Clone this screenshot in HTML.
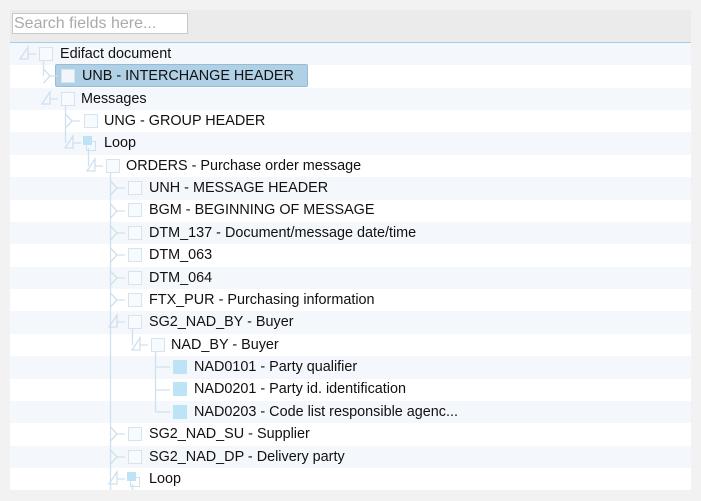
<!DOCTYPE html>
<html><head><style>
body{margin:0;width:701px;height:501px;background:#f2f2f2;font-family:"Liberation Sans",Arial,sans-serif;position:relative;overflow:hidden}
#hdr{position:absolute;left:10px;top:10px;width:681px;height:32px;background:#ebebeb;border-bottom:1px solid #a6cde8}
#search{position:absolute;left:12px;top:13px;width:173px;height:19px;border:1px solid #c8c8c8;background:#fff;color:#aaa;font-size:16px;line-height:19px;padding-left:1px;box-sizing:content-box}
#tree{position:absolute;left:10px;top:43px;width:681px;height:447px;background:#fff;overflow:hidden}
.row{position:absolute;left:0;width:681px;height:22.37px}
.alt{background:#f4f8fc}
.cb{position:absolute;width:12px;height:12px;border:1px solid #d5e4ee;background:#f8fbfd;top:4px}
.cb.f{background:#bde3f7;border-color:#bde3f7}
.t{position:absolute;top:1px;margin-top:2px;font-size:14.4px;line-height:19px;color:#111;white-space:nowrap}
.sel{position:absolute;left:45px;top:0;width:251px;height:21px;background:#b0d0e6;border:1px solid #98bcd6;border-radius:2px}
svg{position:absolute;top:0;left:0}
</style></head><body>
<div id="hdr"></div>
<div id="search">Search fields here...</div>
<div id="tree">
<div class="row alt" style="top:0"></div>
<div class="row" style="top:22.37px"></div>
<div class="row alt" style="top:44.74px"></div>
<div class="row" style="top:67.11px"></div>
<div class="row alt" style="top:89.48px"></div>
<div class="row" style="top:111.85px"></div>
<div class="row alt" style="top:134.22px"></div>
<div class="row" style="top:156.59px"></div>
<div class="row alt" style="top:178.96px"></div>
<div class="row" style="top:201.33px"></div>
<div class="row alt" style="top:223.7px"></div>
<div class="row" style="top:246.07px"></div>
<div class="row alt" style="top:268.44px"></div>
<div class="row" style="top:290.81px"></div>
<div class="row alt" style="top:313.18px"></div>
<div class="row" style="top:335.55px"></div>
<div class="row alt" style="top:357.92px"></div>
<div class="row" style="top:380.29px"></div>
<div class="row alt" style="top:402.66px"></div>
<div class="row" style="top:425.03px"></div>
<div class="sel" style="top:21.4px"></div>
<svg width="681" height="447">
<g fill="none" stroke="#cfe0ee" stroke-width="1.3">
<path d="M33.5 16 V33 M55.5 61 V100 M78.5 105 V123 M100.5 128 V447 M122.5 284 V302 M145.5 307 V369 M122.5 441 V447"/>
<path d="M18 4 V16 H10 Z M18 11 H26"/>
<path d="M40 49 V61 H32 Z M40 56 H48"/>
<path d="M63 93 V105 H55 Z M63 100 H71"/>
<path d="M85 116 V128 H77 Z M85 123 H93"/>
<path d="M107 272 V284 H99 Z M107 279 H115"/>
<path d="M130 295 V307 H122 Z M130 302 H138"/>
<path d="M107 429 V441 H99 Z M107 436 H115"/>
<path d="M33.5 26 L40 33 L33.5 40 M40 33 H48"/>
<path d="M55.5 71 L62 78 L55.5 85 M62 78 H70"/>
<path d="M100.5 138 L107 145 L100.5 152 M107 145 H115"/>
<path d="M100.5 161 L107 168 L100.5 175 M107 168 H115"/>
<path d="M100.5 183 L107 190 L100.5 197 M107 190 H115"/>
<path d="M100.5 205 L107 212 L100.5 219 M107 212 H115"/>
<path d="M100.5 228 L107 235 L100.5 242 M107 235 H115"/>
<path d="M100.5 250 L107 257 L100.5 264 M107 257 H115"/>
<path d="M100.5 384 L107 391 L100.5 398 M107 391 H115"/>
<path d="M100.5 407 L107 414 L100.5 421 M107 414 H115"/>
<path d="M145.5 324 H160 M145.5 347 H160 M145.5 369 H160"/>
</g>
<rect x="73" y="93" width="9" height="9" fill="#bde3f7"/>
<path d="M78.5 98.5 H85.5 V107.5 H76.5 V102" fill="none" stroke="#cfe0ee"/>
<rect x="117" y="429" width="9" height="9" fill="#bde3f7"/>
<path d="M122.5 434.5 H129.5 V443.5 H120.5 V438" fill="none" stroke="#cfe0ee"/>
</svg>
<div class="cb" style="left:29px;top:4px"></div><div class="t" style="left:50px;top:0">Edifact document</div>
<div class="cb" style="left:51px;top:26px;background:#f2f6fa"></div><div class="t" style="left:72px;top:22px">UNB - INTERCHANGE HEADER</div>
<div class="cb" style="left:51px;top:49px"></div><div class="t" style="left:71px;top:45px">Messages</div>
<div class="cb" style="left:74px;top:71px"></div><div class="t" style="left:94px;top:67px">UNG - GROUP HEADER</div>
<div class="t" style="left:94px;top:89px">Loop</div>
<div class="cb" style="left:96px;top:116px"></div><div class="t" style="left:116px;top:112px">ORDERS - Purchase order message</div>
<div class="cb" style="left:118px;top:138px"></div><div class="t" style="left:139px;top:134px">UNH - MESSAGE HEADER</div>
<div class="cb" style="left:118px;top:160px"></div><div class="t" style="left:139px;top:156px">BGM - BEGINNING OF MESSAGE</div>
<div class="cb" style="left:118px;top:183px"></div><div class="t" style="left:139px;top:179px">DTM_137 - Document/message date/time</div>
<div class="cb" style="left:118px;top:205px"></div><div class="t" style="left:139px;top:201px">DTM_063</div>
<div class="cb" style="left:118px;top:228px"></div><div class="t" style="left:139px;top:224px">DTM_064</div>
<div class="cb" style="left:118px;top:250px"></div><div class="t" style="left:139px;top:246px">FTX_PUR - Purchasing information</div>
<div class="cb" style="left:118px;top:272px"></div><div class="t" style="left:139px;top:268px">SG2_NAD_BY - Buyer</div>
<div class="cb" style="left:141px;top:295px"></div><div class="t" style="left:161px;top:291px">NAD_BY - Buyer</div>
<div class="cb f" style="left:163px;top:317px"></div><div class="t" style="left:184px;top:313px">NAD0101 - Party qualifier</div>
<div class="cb f" style="left:163px;top:339px"></div><div class="t" style="left:184px;top:335px">NAD0201 - Party id. identification</div>
<div class="cb f" style="left:163px;top:362px"></div><div class="t" style="left:184px;top:358px">NAD0203 - Code list responsible agenc...</div>
<div class="cb" style="left:118px;top:384px"></div><div class="t" style="left:139px;top:380px">SG2_NAD_SU - Supplier</div>
<div class="cb" style="left:118px;top:407px"></div><div class="t" style="left:139px;top:403px">SG2_NAD_DP - Delivery party</div>
<div class="t" style="left:139px;top:425px">Loop</div>
</div>
</body></html>
